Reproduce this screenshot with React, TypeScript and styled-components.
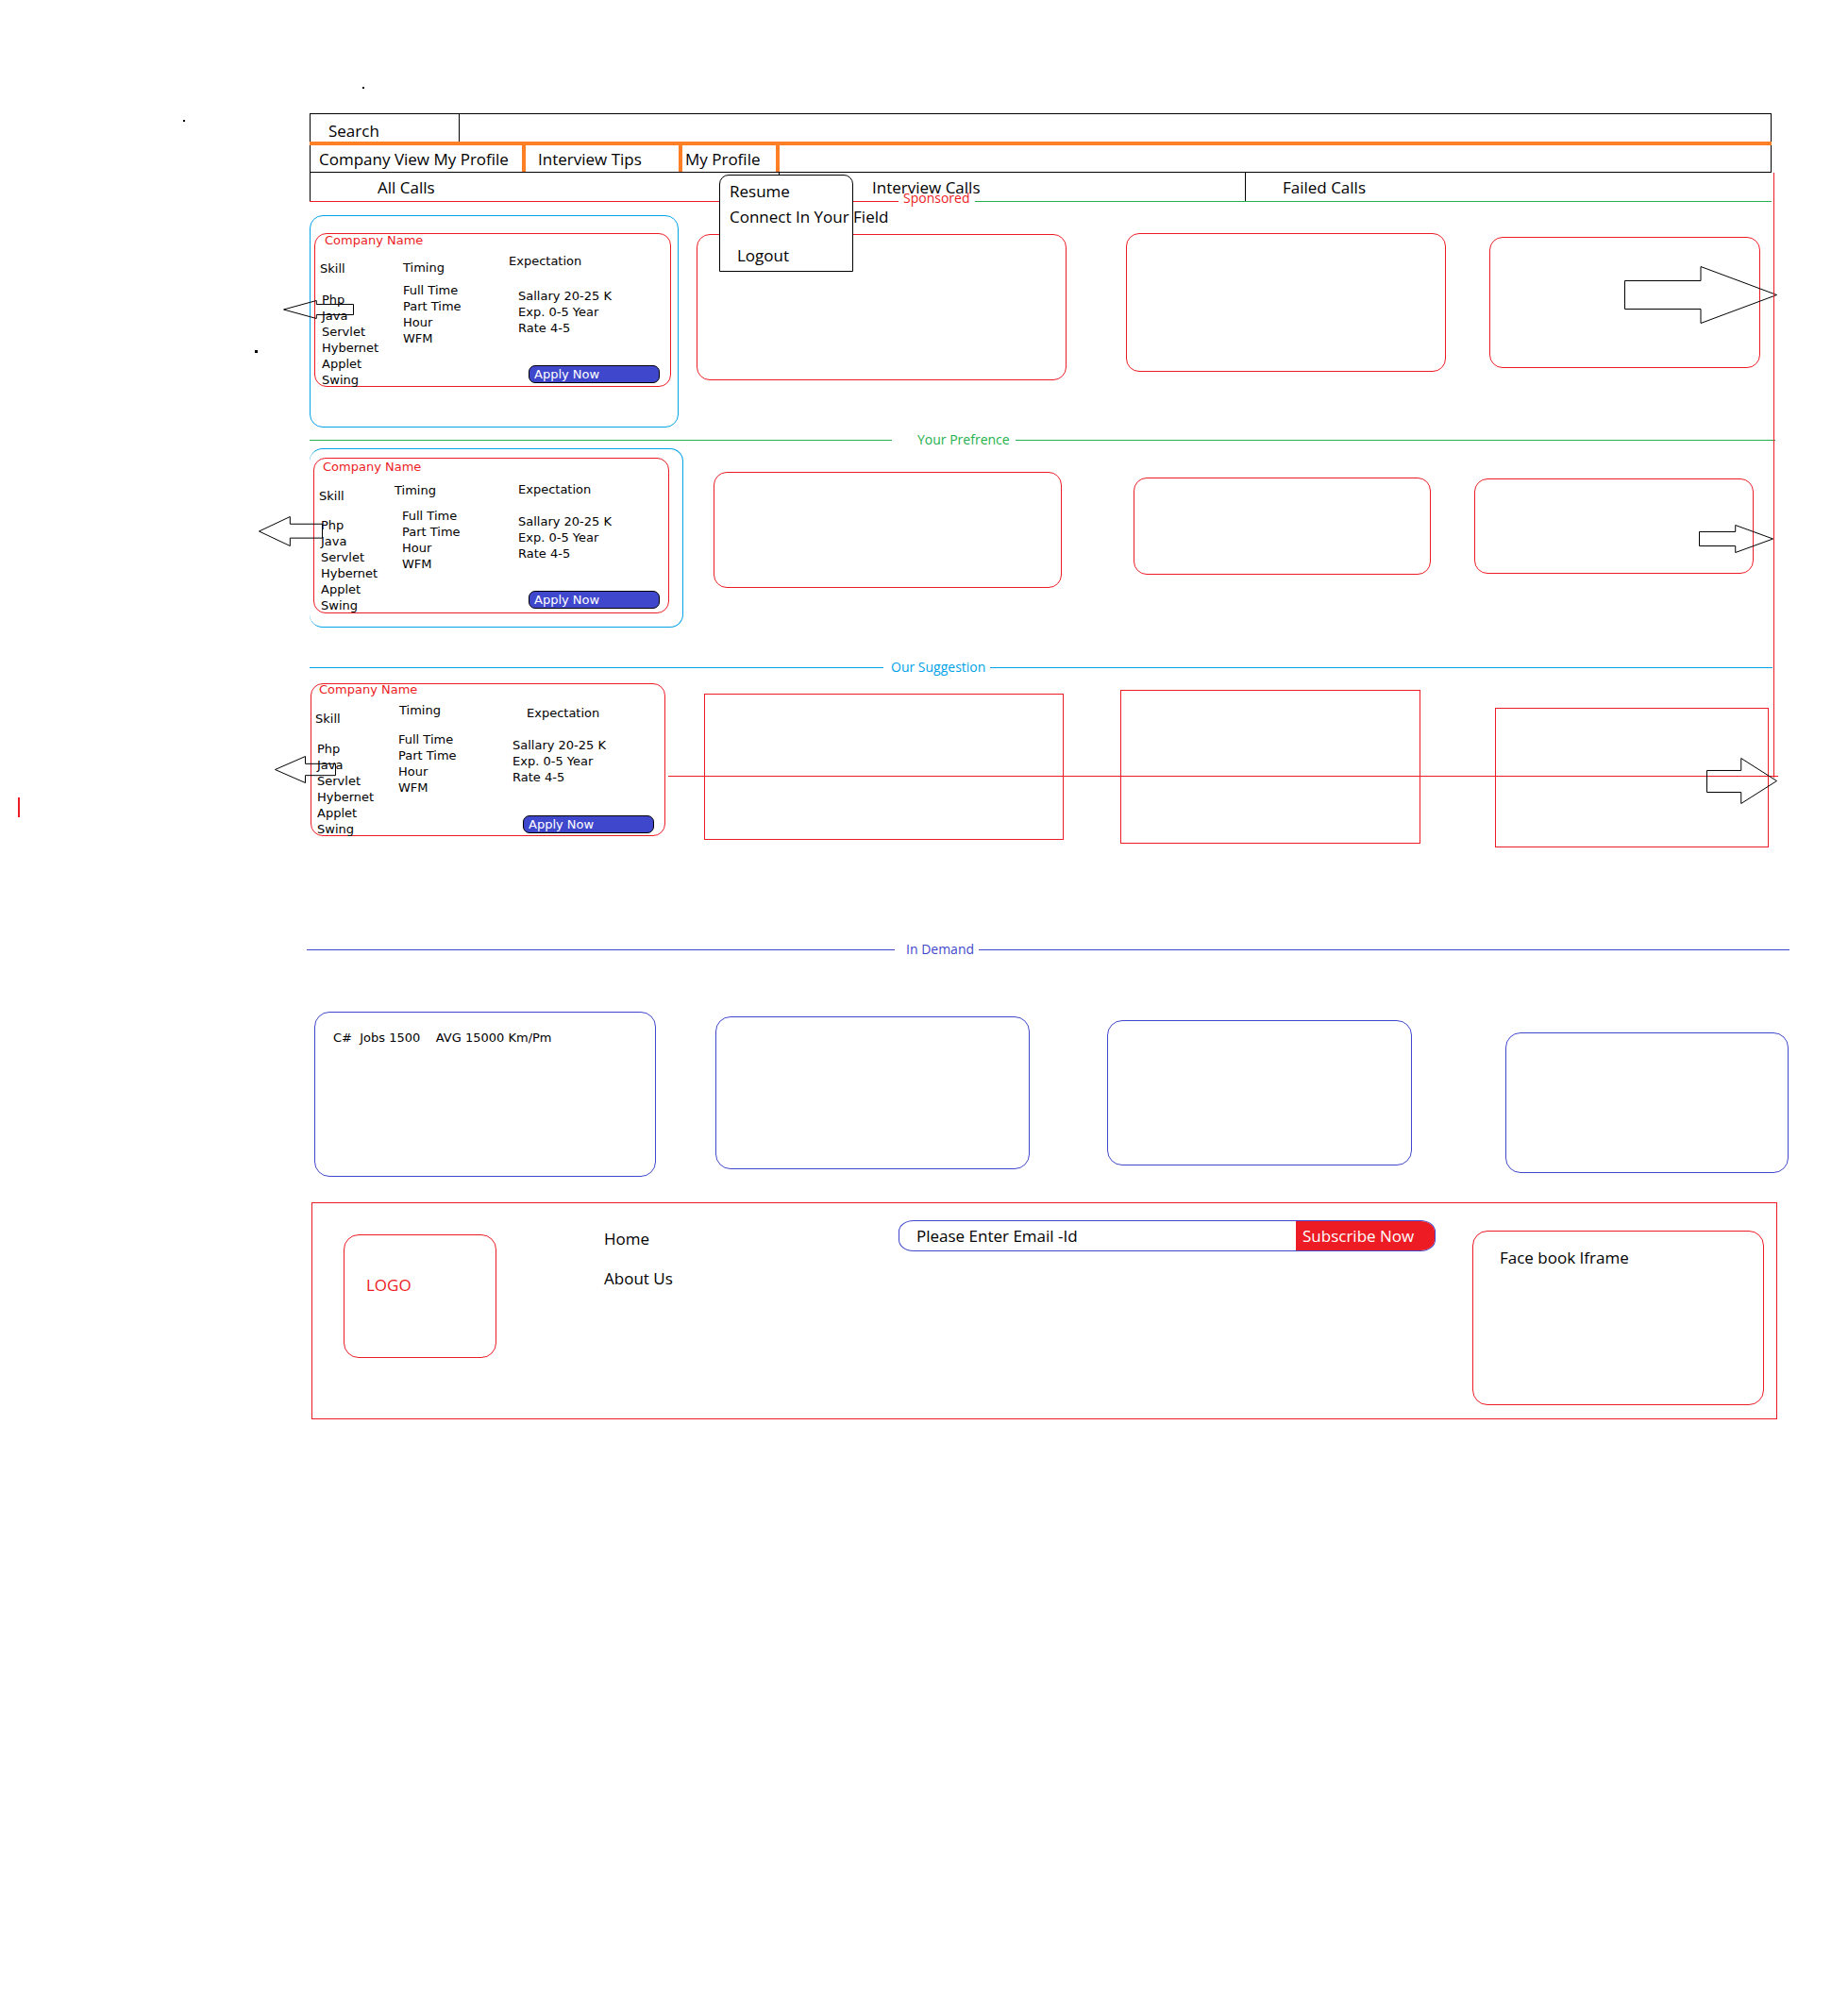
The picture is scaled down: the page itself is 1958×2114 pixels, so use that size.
import React from "react";
import styled, { createGlobalStyle } from "styled-components";

const RED = "#ed1c24";
const BLUE = "#00a2e8";
const INDIGO = "#3f48cc";
const GREEN = "#22b14c";
const ORANGE = "#ff7f27";

const GlobalStyle = createGlobalStyle`
  html, body {
    margin: 0;
    padding: 0;
    background: #fff;
  }
  body {
    font-family: "Open Sans", "Liberation Sans", sans-serif;
    color: #000;
  }
`;

const Page = styled.div`
  position: relative;
  width: 1958px;
  height: 2114px;
  box-sizing: border-box;
  padding: 120px 0 0 328px;
  overflow: hidden;
`;

/* ---------- header ---------- */

const Header = styled.header`
  position: relative;
  width: 1549px;
  z-index: 2;
  font-size: 17px;
`;

const SearchRow = styled.div`
  display: flex;
  height: 30px;
  box-sizing: border-box;
  border-top: 1px solid #000;
  border-left: 1px solid #000;
  border-right: 1px solid #000;
`;

const SearchCell = styled.div`
  width: 158px;
  box-sizing: border-box;
  border-right: 1px solid #000;
  display: flex;
  align-items: flex-end;
  padding-left: 19px;
  line-height: 22px;
`;

const OrangeBar = styled.div`
  height: 4px;
  background: ${ORANGE};
`;

const NavRow = styled.nav`
  display: flex;
  height: 29px;
  box-sizing: border-box;
  border-left: 1px solid #000;
  border-right: 1px solid #000;
  border-bottom: 1px solid #000;
`;

const NavTab = styled.div<{ $w: number; $pad: number }>`
  width: ${({ $w }) => $w}px;
  box-sizing: border-box;
  padding-left: ${({ $pad }) => $pad}px;
  border-right: 4px solid ${ORANGE};
  display: flex;
  align-items: center;
  white-space: nowrap;
`;

const CallsRow = styled.div`
  display: flex;
  height: 30px;
  width: 1557px;
  box-sizing: border-box;
  border-left: 1px solid #000;
`;

const CallCell = styled.div<{ $w?: number; $pad: number; $divider?: boolean }>`
  ${({ $w }) => ($w ? `width: ${$w}px;` : "flex: 1;")}
  box-sizing: border-box;
  padding-left: ${({ $pad }) => $pad}px;
  border-right: ${({ $divider }) => ($divider ? "1px solid #000" : "none")};
  display: flex;
  align-items: center;
  white-space: nowrap;
`;

const Underline = styled.div`
  display: flex;
  height: 1px;
  gap: 81px;
`;

const LineSeg = styled.div<{ $w: number; $color: string }>`
  width: ${({ $w }) => $w}px;
  height: 1px;
  background: ${({ $color }) => $color};
`;

const Sponsored = styled.span`
  position: absolute;
  left: 629px;
  top: 80px;
  font-size: 14px;
  line-height: 19px;
  color: ${RED};
`;

const Dropdown = styled.ul`
  position: absolute;
  left: 434px;
  top: 65px;
  width: 142px;
  height: 103px;
  box-sizing: border-box;
  margin: 0;
  padding: 0;
  list-style: none;
  background: #fff;
  border: 1px solid #000;
  border-radius: 10px 10px 0 0;
  display: flex;
  flex-direction: column;
`;

const DropItem = styled.li<{ $top: number; $indent: number }>`
  margin-top: ${({ $top }) => $top}px;
  padding-left: ${({ $indent }) => $indent}px;
  line-height: 23px;
  white-space: nowrap;
`;

/* ---------- content rows ---------- */

const Row = styled.section<{ $h: number }>`
  position: relative;
  display: flex;
  align-items: flex-start;
  height: ${({ $h }) => $h}px;
`;

type BoxProps = {
  $w: number;
  $h: number;
  $top: number;
  $left: number;
};

const Frame = styled.div<BoxProps & { $open?: boolean }>`
  flex: none;
  box-sizing: border-box;
  width: ${({ $w }) => $w}px;
  height: ${({ $h }) => $h}px;
  margin-top: ${({ $top }) => $top}px;
  margin-left: ${({ $left }) => $left}px;
  border: 1px solid ${BLUE};
  border-left: ${({ $open }) => ($open ? "none" : `1px solid ${BLUE}`)};
  border-radius: 14px;
`;

const Slot = styled.div<BoxProps & { $square?: boolean }>`
  flex: none;
  box-sizing: border-box;
  width: ${({ $w }) => $w}px;
  height: ${({ $h }) => $h}px;
  margin-top: ${({ $top }) => $top}px;
  margin-left: ${({ $left }) => $left}px;
  border: 1px solid ${RED};
  border-radius: ${({ $square }) => ($square ? "0" : "14px")};
`;

const CardBox = styled.article<BoxProps>`
  flex: none;
  box-sizing: border-box;
  width: ${({ $w }) => $w}px;
  height: ${({ $h }) => $h}px;
  margin-top: ${({ $top }) => $top}px;
  margin-left: ${({ $left }) => $left}px;
  border: 1px solid ${RED};
  border-radius: 13px;
  font-family: "DejaVu Sans", Verdana, sans-serif;
  font-size: 13px;
`;

const CardTitle = styled.h3<{ $x: number; $t: number }>`
  margin: ${({ $t }) => $t}px 0 ${({ $t }) => -$t}px ${({ $x }) => $x}px;
  font-size: 13px;
  font-weight: normal;
  line-height: 16px;
  color: ${RED};
`;

const Columns = styled.div<{ $x: number }>`
  display: flex;
  padding-left: ${({ $x }) => $x}px;
`;

const Column = styled.div<{ $w?: number }>`
  ${({ $w }) => ($w ? `width: ${$w}px; flex: none;` : "flex: 1;")}
  display: flex;
  flex-direction: column;
  align-items: flex-start;
`;

const ColHead = styled.div<{ $top: number; $indent: number }>`
  margin: ${({ $top }) => $top}px 0 0 ${({ $indent }) => $indent}px;
  line-height: 17px;
  white-space: nowrap;
`;

const ColList = styled.ul<{ $top: number; $indent: number }>`
  margin: ${({ $top }) => $top}px 0 0 ${({ $indent }) => $indent}px;
  padding: 0;
  list-style: none;
  line-height: 17px;
  white-space: nowrap;
`;

const ApplyButton = styled.button<{ $top: number; $left: number }>`
  margin: ${({ $top }) => $top}px 0 0 ${({ $left }) => $left}px;
  width: 139px;
  height: 19px;
  box-sizing: border-box;
  padding: 0 0 0 5px;
  border: 1px solid #000;
  border-radius: 7px;
  background: ${INDIGO};
  color: #fff;
  font-family: "DejaVu Sans", Verdana, sans-serif;
  font-size: 13px;
  line-height: 17px;
  text-align: left;
`;

const ArrowSvg = styled.svg<{ $x: number; $y: number }>`
  position: absolute;
  left: ${({ $x }) => $x}px;
  top: ${({ $y }) => $y}px;
  overflow: visible;
  pointer-events: none;
`;

const Overline = styled.div<{ $x: number; $y: number; $w: number }>`
  position: absolute;
  left: ${({ $x }) => $x}px;
  top: ${({ $y }) => $y}px;
  width: ${({ $w }) => $w}px;
  height: 1px;
  background: ${RED};
`;

const Divider = styled.div<{ $color: string; $left: number }>`
  display: flex;
  align-items: center;
  height: 14px;
  margin-left: ${({ $left }) => $left}px;
  color: ${({ $color }) => $color};
  font-size: 14px;
`;

const Rule = styled.div<{ $w: number; $color: string }>`
  width: ${({ $w }) => $w}px;
  height: 1px;
  background: ${({ $color }) => $color};
  flex: none;
`;

const RuleLabel = styled.span<{ $l: number; $r: number }>`
  margin: 0 ${({ $r }) => $r}px 0 ${({ $l }) => $l}px;
  line-height: 14px;
  white-space: nowrap;
`;

const DemandCard = styled.div<BoxProps>`
  flex: none;
  box-sizing: border-box;
  width: ${({ $w }) => $w}px;
  height: ${({ $h }) => $h}px;
  margin-top: ${({ $top }) => $top}px;
  margin-left: ${({ $left }) => $left}px;
  border: 1px solid ${INDIGO};
  border-radius: 16px;
  padding: 18px 0 0 19px;
  font-family: "DejaVu Sans", Verdana, sans-serif;
  font-size: 13px;
  line-height: 17px;
  white-space: pre;
`;

/* ---------- footer ---------- */

const Footer = styled.footer`
  display: flex;
  align-items: flex-start;
  box-sizing: border-box;
  width: 1553px;
  height: 230px;
  margin: 14px 0 0 2px;
  border: 1px solid ${RED};
  font-size: 17px;
`;

const LogoBox = styled.div`
  flex: none;
  box-sizing: border-box;
  width: 162px;
  height: 131px;
  margin: 33px 0 0 33px;
  padding: 41px 0 0 23px;
  border: 1px solid ${RED};
  border-radius: 16px;
  color: ${RED};
  line-height: 23px;
`;

const FooterLinks = styled.ul`
  flex: none;
  width: 312px;
  margin: 26px 0 0 114px;
  padding: 0;
  list-style: none;
  display: flex;
  flex-direction: column;
  gap: 19px;
  line-height: 23px;
`;

const SubscribeForm = styled.form`
  flex: none;
  display: flex;
  width: 569px;
  height: 33px;
  box-sizing: border-box;
  margin-top: 18px;
  border: 1px solid ${INDIGO};
  border-radius: 16px / 12px;
  overflow: hidden;
`;

const EmailField = styled.div`
  flex: 1;
  display: flex;
  align-items: center;
  padding-left: 18px;
  white-space: nowrap;
`;

const SubscribeButton = styled.div`
  width: 147px;
  display: flex;
  align-items: center;
  padding-left: 7px;
  box-sizing: border-box;
  background: ${RED};
  color: #fff;
  white-space: nowrap;
`;

const FbBox = styled.div`
  flex: none;
  box-sizing: border-box;
  width: 309px;
  height: 185px;
  margin: 29px 0 0 39px;
  padding: 16px 0 0 28px;
  border: 1px solid ${RED};
  border-radius: 16px;
  line-height: 23px;
`;

/* ---------- free marks on the canvas ---------- */

const Speck = styled.div<{ $x: number; $y: number; $w: number; $h: number; $color?: string }>`
  position: absolute;
  left: ${({ $x }) => $x}px;
  top: ${({ $y }) => $y}px;
  width: ${({ $w }) => $w}px;
  height: ${({ $h }) => $h}px;
  background: ${({ $color }) => $color ?? "#000"};
  z-index: 3;
`;

/* ---------- data ---------- */

type Col = {
  w?: number;
  head: string;
  headTop: number;
  headIndent?: number;
  items: string[];
  gap: number;
  indent: number;
  apply?: { top: number; left: number };
};

type CardLayout = {
  titleX: number;
  titleTop: number;
  firstX: number;
  skill: [number, number, number, number];
  timing: [number, number, number, number];
  exp: { headTop: number; headIndent: number; gap: number; indent: number; applyTop: number; applyLeft: number };
};

const SKILLS = ["Php", "Java", "Servlet", "Hybernet", "Applet", "Swing"];
const TIMINGS = ["Full Time", "Part Time", "Hour", "WFM"];
const EXPECTATIONS = ["Sallary 20-25 K", "Exp. 0-5 Year", "Rate 4-5"];

function buildCols(l: CardLayout): Col[] {
  return [
    { w: l.skill[0], head: "Skill", headTop: l.skill[1], items: SKILLS, gap: l.skill[2], indent: l.skill[3] },
    { w: l.timing[0], head: "Timing", headTop: l.timing[1], items: TIMINGS, gap: l.timing[2], indent: l.timing[3] },
    {
      head: "Expectation",
      headTop: l.exp.headTop,
      headIndent: l.exp.headIndent,
      items: EXPECTATIONS,
      gap: l.exp.gap,
      indent: l.exp.indent,
      apply: { top: l.exp.applyTop, left: l.exp.applyLeft },
    },
  ];
}

const ListingCard = ({ layout, box }: { layout: CardLayout; box: BoxProps }) => (
  <CardBox {...box}>
    <CardTitle $x={layout.titleX} $t={layout.titleTop}>
      Company Name
    </CardTitle>
    <Columns $x={layout.firstX}>
      {buildCols(layout).map((c) => (
        <Column key={c.head} $w={c.w}>
          <ColHead $top={c.headTop} $indent={c.headIndent ?? 0}>
            {c.head}
          </ColHead>
          <ColList $top={c.gap} $indent={c.indent}>
            {c.items.map((it) => (
              <li key={it}>{it}</li>
            ))}
          </ColList>
          {c.apply && (
            <ApplyButton type="button" $top={c.apply.top} $left={c.apply.left}>
              Apply Now
            </ApplyButton>
          )}
        </Column>
      ))}
    </Columns>
  </CardBox>
);

const Arrow = ({
  dir,
  x,
  y,
  w,
  h,
  head = 0.5,
  s1 = 0.25,
  s2 = 0.75,
}: {
  dir: "left" | "right";
  x: number;
  y: number;
  w: number;
  h: number;
  head?: number;
  s1?: number;
  s2?: number;
}) => {
  const hx = dir === "left" ? head * w : (1 - head) * w;
  const tip = dir === "left" ? 0 : w;
  const tail = dir === "left" ? w : 0;
  const pts = [
    [tip, h / 2],
    [hx, 0],
    [hx, s1 * h],
    [tail, s1 * h],
    [tail, s2 * h],
    [hx, s2 * h],
    [hx, h],
  ]
    .map(([a, b]) => `${a + 0.5},${b + 0.5}`)
    .join(" ");
  return (
    <ArrowSvg $x={x} $y={y} width={w + 1} height={h + 1} viewBox={`0 0 ${w + 1} ${h + 1}`}>
      <polygon points={pts} fill="none" stroke="#000" strokeWidth={1} />
    </ArrowSvg>
  );
};

const card1: CardLayout = {
  titleX: 10,
  titleTop: -1,
  firstX: 5,
  skill: [88, 11.5, 16, 2],
  timing: [112, 10.5, 7, 0],
  exp: { headTop: 3.5, headIndent: 0, gap: 20, indent: 10, applyTop: 31.5, applyLeft: 21 },
};

const card2: CardLayout = {
  titleX: 9,
  titleTop: 1,
  firstX: 5,
  skill: [80, 14.5, 14, 2],
  timing: [131, 8.5, 10, 8],
  exp: { headTop: 7.5, headIndent: 0, gap: 17, indent: 0, applyTop: 31, applyLeft: 11 },
};

const card3: CardLayout = {
  titleX: 8,
  titleTop: -2,
  firstX: 4,
  skill: [89, 11.5, 15, 2],
  timing: [120, 2.5, 14, -1],
  exp: { headTop: 5.5, headIndent: 15, gap: 17, indent: 0, applyTop: 32, applyLeft: 11 },
};

export default function App() {
  return (
    <Page>
      <GlobalStyle />

      <Header>
        <SearchRow>
          <SearchCell>Search</SearchCell>
        </SearchRow>
        <OrangeBar />
        <NavRow>
          <NavTab $w={228} $pad={9}>
            Company View My Profile
          </NavTab>
          <NavTab $w={166} $pad={13}>
            Interview Tips
          </NavTab>
          <NavTab $w={103} $pad={3}>
            My Profile
          </NavTab>
        </NavRow>
        <CallsRow>
          <CallCell $w={497} $pad={71} $divider>
            All Calls
          </CallCell>
          <CallCell $w={494} $pad={98} $divider>
            Interview Calls
          </CallCell>
          <CallCell $pad={39}>Failed Calls</CallCell>
        </CallsRow>
        <Underline>
          <LineSeg $w={627} $color={RED} />
          <LineSeg $w={849} $color={GREEN} />
        </Underline>
        <Sponsored>Sponsored</Sponsored>
        <Dropdown>
          <DropItem $top={5} $indent={10}>
            Resume
          </DropItem>
          <DropItem $top={4} $indent={10}>
            Connect In Your Field
          </DropItem>
          <DropItem $top={18} $indent={18}>
            Logout
          </DropItem>
        </Dropdown>
      </Header>

      <Row $h={245}>
        <Frame $w={391} $h={225} $top={14} $left={0}>
          <ListingCard layout={card1} box={{ $w: 378, $h: 163, $top: 18, $left: 4 }} />
        </Frame>
        <Slot $w={392} $h={155} $top={34} $left={19} />
        <Slot $w={339} $h={147} $top={33} $left={63} />
        <Slot $w={287} $h={139} $top={37} $left={46} />
        <Arrow dir="left" x={-28} y={104} w={74} h={19} head={0.47} s1={0.21} s2={0.79} />
        <Arrow dir="right" x={1393} y={68} w={161} h={60} />
      </Row>

      <Divider $color={GREEN} $left={0}>
        <Rule $w={617} $color={GREEN} />
        <RuleLabel $l={27} $r={6}>
          Your Prefrence
        </RuleLabel>
        <Rule $w={805} $color={GREEN} />
      </Divider>

      <Row $h={227}>
        <Frame $w={396} $h={190} $top={2} $left={0} $open>
          <ListingCard layout={card2} box={{ $w: 377, $h: 165, $top: 9, $left: 4 }} />
        </Frame>
        <Slot $w={369} $h={123} $top={27} $left={32} />
        <Slot $w={315} $h={103} $top={33} $left={76} />
        <Slot $w={296} $h={101} $top={34} $left={46} />
        <Arrow dir="left" x={-54} y={74} w={67} h={31} head={0.49} s1={0.25} s2={0.73} />
        <Arrow dir="right" x={1472} y={83} w={78} h={29} head={0.51} s1={0.24} s2={0.76} />
      </Row>

      <Divider $color={BLUE} $left={0}>
        <Rule $w={608} $color={BLUE} />
        <RuleLabel $l={8} $r={5}>
          Our Suggestion
        </RuleLabel>
        <Rule $w={829} $color={BLUE} />
      </Divider>

      <Row $h={285}>
        <ListingCard layout={card3} box={{ $w: 376, $h: 162, $top: 10, $left: 1 }} />
        <Slot $w={381} $h={155} $top={21} $left={41} $square />
        <Slot $w={318} $h={163} $top={17} $left={60} $square />
        <Slot $w={290} $h={148} $top={36} $left={79} $square />
        <Overline $x={380} $y={108} $w={1176} />
        <Arrow dir="left" x={-37} y={87} w={64} h={28} head={0.5} s1={0.28} s2={0.72} />
        <Arrow dir="right" x={1480} y={89} w={74} h={48} head={0.51} s1={0.27} s2={0.75} />
      </Row>

      <Divider $color={INDIGO} $left={-3}>
        <Rule $w={623} $color={INDIGO} />
        <RuleLabel $l={12} $r={5}>
          In Demand
        </RuleLabel>
        <Rule $w={859} $color={INDIGO} />
      </Divider>

      <Row $h={247}>
        <DemandCard $w={362} $h={175} $top={59} $left={5}>
          {"C#  Jobs 1500    AVG 15000 Km/Pm"}
        </DemandCard>
        <DemandCard $w={333} $h={162} $top={64} $left={63} />
        <DemandCard $w={323} $h={154} $top={68} $left={82} />
        <DemandCard $w={300} $h={149} $top={81} $left={99} />
      </Row>

      <Footer>
        <LogoBox>LOGO</LogoBox>
        <FooterLinks>
          <li>Home</li>
          <li>About Us</li>
        </FooterLinks>
        <SubscribeForm>
          <EmailField>Please Enter Email -Id</EmailField>
          <SubscribeButton>Subscribe Now</SubscribeButton>
        </SubscribeForm>
        <FbBox>Face book Iframe</FbBox>
      </Footer>

      <Speck $x={1879} $y={183} $w={1} $h={641} $color={RED} />
      <Speck $x={384} $y={92} $w={2} $h={2} />
      <Speck $x={194} $y={127} $w={2} $h={2} />
      <Speck $x={270} $y={371} $w={3} $h={3} />
      <Speck $x={19} $y={845} $w={2} $h={21} $color={RED} />
    </Page>
  );
}
